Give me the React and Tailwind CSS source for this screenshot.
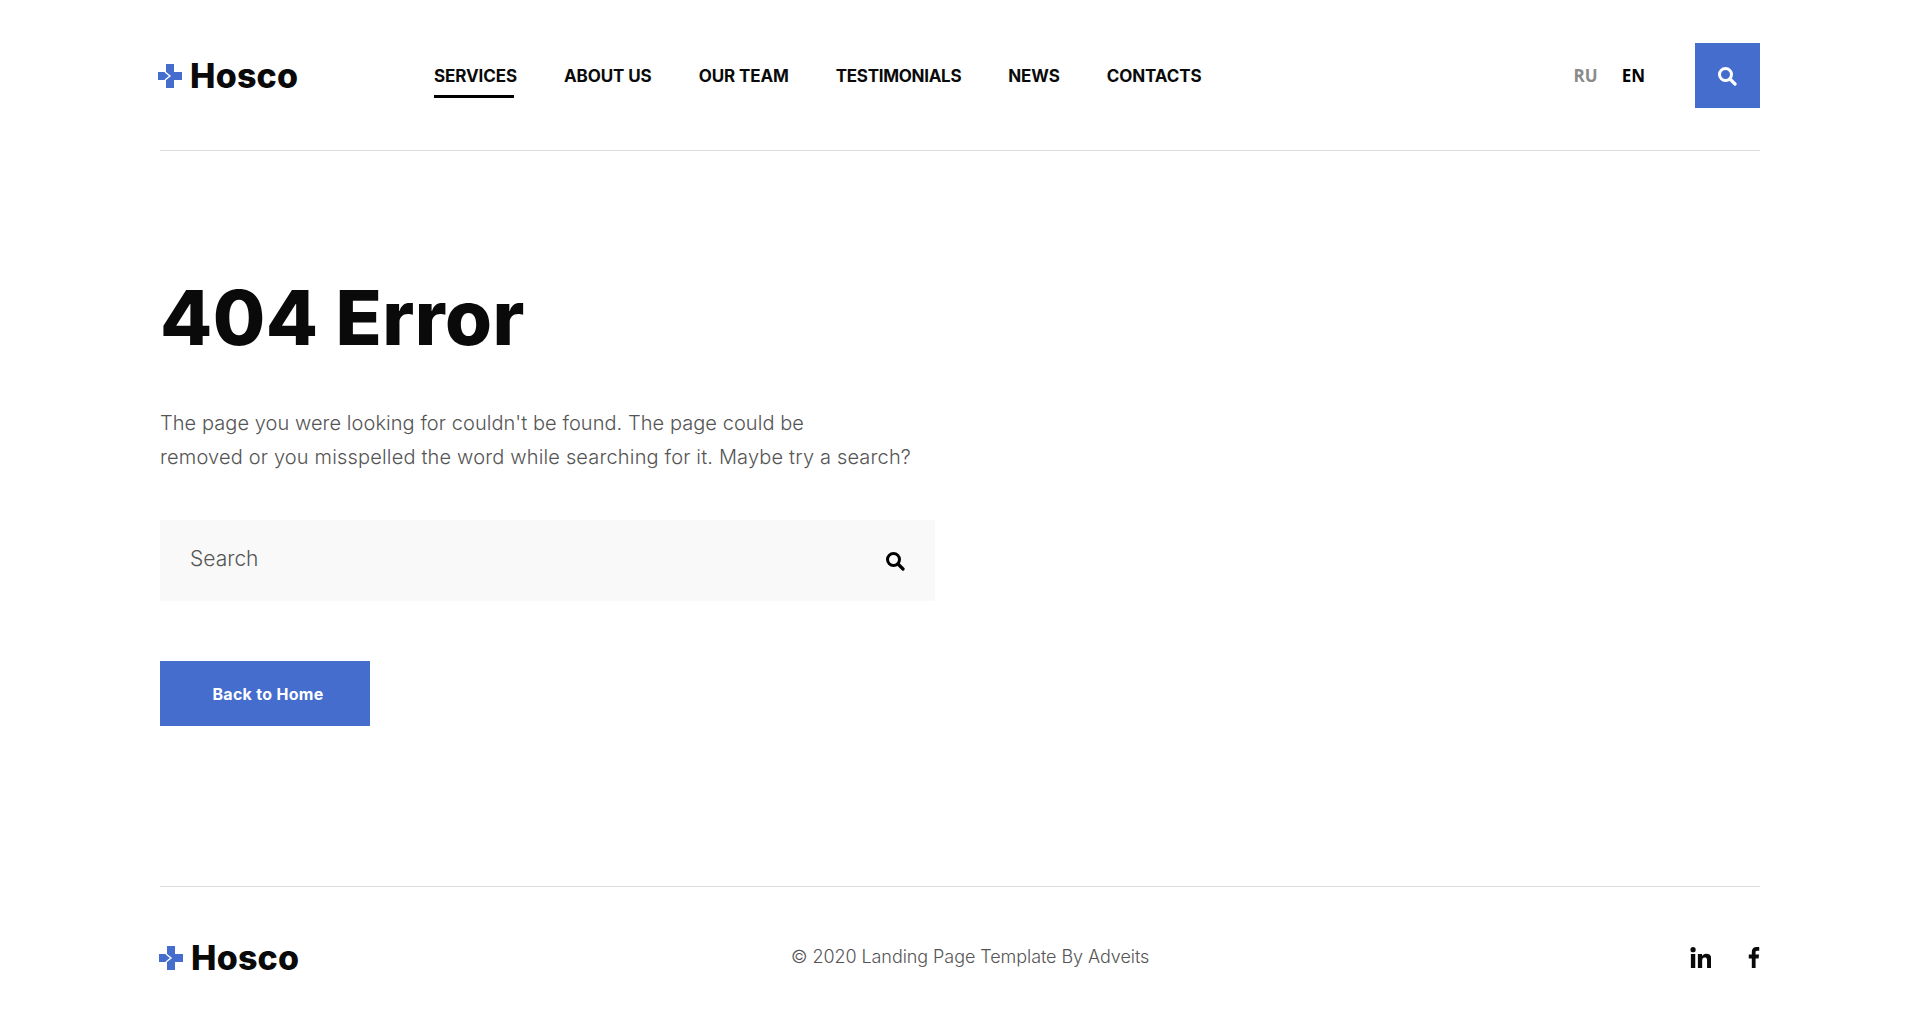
import React from 'react'

const navItems = ['Services', 'About us', 'Our team', 'Testimonials', 'News', 'Contacts']

function Logo() {
  return (
    <div className="flex items-center gap-[8px]">
      <svg width="24" height="24" viewBox="0 0 24 24" className="shrink-0">
        <path d="M8 0h8v8h8v8h-8v8H8v-8H0V8h8z" fill="#456dcd" />
        <path d="M7 8l5 4-5 4" fill="none" stroke="#fff" strokeWidth="1.4" />
      </svg>
      <span className="font-['Inter',sans-serif] text-[34px] leading-none font-extrabold tracking-[0.2px] text-[#0a0a0a]">Hosco</span>
    </div>
  )
}

function SearchIcon({ className }) {
  return (
    <svg viewBox="0 0 20 20" className={className} fill="none" stroke="currentColor">
      <circle cx="8.5" cy="8.5" r="6" strokeWidth="3" />
      <path d="M13 13l5 5" strokeWidth="3.2" strokeLinecap="round" />
    </svg>
  )
}

export default function App() {
  return (
    <div className="min-h-[1030px] w-full bg-white font-['Inter',sans-serif]">
      <div className="mx-auto w-[1600px]">
        <header className="flex h-[151px] items-start border-b border-[#dcdcdc]">
          <div className="flex h-[65px] mt-[43px] w-full items-center">
            <div className="w-[276px] -ml-[2px]"><Logo /></div>
            <nav className="flex gap-[47px] pt-[2px]">
              {navItems.map((item, i) => (
                <a key={item} href="#" className={`relative text-[17px] leading-none font-bold uppercase text-[#0a0a0a] ${i === 3 ? 'tracking-[-0.3px]' : 'tracking-[-0.1px]'}`}>
                  {item}
                  {i === 0 && <span className="absolute left-0 top-[27px] h-[3px] w-[80px] bg-black" />}
                </a>
              ))}
            </nav>
            <div className="ml-auto flex items-center gap-[24px] font-['Open_Sans',sans-serif] text-[17px] font-bold">
              <span className="text-[#8a8a8a]">RU</span>
              <span className="text-black">EN</span>
            </div>
            <button className="ml-[50px] flex h-[65px] w-[65px] items-center justify-center bg-[#456dcd] pr-[1px] text-white">
              <SearchIcon className="h-[20px] w-[20px]" />
            </button>
          </div>
        </header>

        <main className="h-[736px] border-b border-[#dcdcdc] pt-[116px]">
          <h1 className="text-[76px] leading-[100px] font-extrabold tracking-[0.4px] text-[#0a0a0a]">404 Error</h1>
          <p className="mt-[39px] w-[780px] text-[20px] leading-[34px] font-light text-[#555]">
            <span className="tracking-[0.06px]">The page you were looking for couldn't be found. The page could be</span><br />
            <span className="tracking-[0.17px]">removed or you misspelled the word while searching for it. Maybe try a search?</span>
          </p>
          <div className="mt-[46px] flex h-[81px] w-[775px] items-center justify-between bg-[#f9f9f9] pl-[30px] pr-[30px]">
            <span className="-mt-[4px] text-[21px] font-light text-[#555]">Search</span>
            <SearchIcon className="mt-[1px] h-[20px] w-[20px] text-black" />
          </div>
          <a href="#" className="mt-[60px] flex h-[65px] w-[210px] items-center justify-center bg-[#456dcd] pl-[6px] text-[16px] font-bold tracking-[0.3px] text-white">
            Back to Home
          </a>
        </main>

        <footer className="flex h-[143px] items-center justify-between pb-[2px]">
          <div className="-ml-[1px]"><Logo /></div>
          <span className="-mt-[2px] ml-[-49px] text-[18px] font-light tracking-[-0.07px] text-[#555]">© 2020 Landing Page Template By Adveits</span>
          <div className="flex items-center gap-[37px]">
            <svg width="21" height="21" viewBox="0 0 24 24" fill="#0a0a0a">
              <path d="M1 8h5v16H1zM3.500 0a3 3 0 1 1 0 6 3 3 0 0 1 0-6zM9 8h4.800v2.200h.1c.7-1.300 2.300-2.600 4.700-2.600 5 0 5.900 3.300 5.900 7.600V24h-5v-7.800c0-1.900 0-4.200-2.600-4.200s-3 2-3 4.100V24H9z" />
            </svg>
            <svg width="12" height="21" viewBox="0 0 12 24" fill="#0a0a0a">
              <path d="M3.500 24V13H0V8.500h3.500V5.500C3.500 2 5.600 0 8.800 0c1.400 0 2.700.1 3.200.2v4h-2.200C8 4.200 7.800 5 7.800 6.200v2.300h4l-.6 4.500H7.800v11z" />
            </svg>
          </div>
        </footer>
      </div>
    </div>
  )
}
